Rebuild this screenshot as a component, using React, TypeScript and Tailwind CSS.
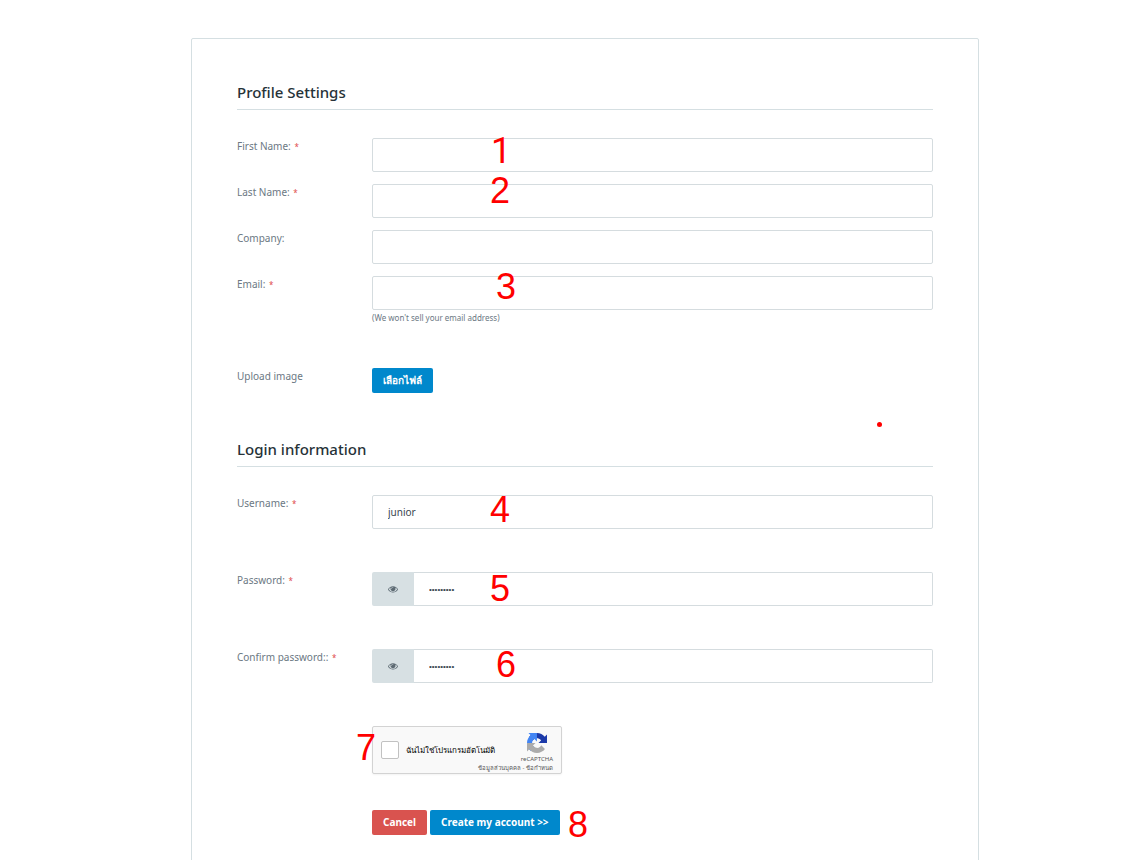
import { useState } from "react";
import type { ReactNode } from "react";

const inputClass =
  "block h-[34px] w-full rounded-xs border border-[#d5dcdf] bg-white px-[15px] text-[10px] text-[#3a4750] focus:outline-none focus:border-[#0088cc]";

const buttonClass =
  "h-[25px] rounded-xs px-[11px] text-[10px] leading-[25px] font-bold text-white";

function Heading({ children }: { children: ReactNode }) {
  return (
    <h2 className="mb-7 border-b border-[#d5dfe2] pb-[7px] text-[15px] leading-5 font-medium text-[#263238]">
      {children}
    </h2>
  );
}

function Row({
  label,
  htmlFor,
  required,
  children,
}: {
  label?: string;
  htmlFor?: string;
  required?: boolean;
  children: ReactNode;
}) {
  return (
    <div className="grid grid-cols-[135px_1fr] items-start">
      {label ? (
        <label htmlFor={htmlFor} className="text-[10px] leading-4 text-[#6b7883]">
          {label} {required && <span className="ml-px text-[8px] text-[#e04b4d]">*</span>}
        </label>
      ) : (
        <span />
      )}
      <div className="relative">{children}</div>
    </div>
  );
}

// Step number drawn on top of the form
function Step({ n, className }: { n: number; className: string }) {
  return (
    <span
      className={`pointer-events-none absolute text-[36px] leading-9 text-[#ff0000] ${className} ${
        n === 1 ? "font-['Roboto',sans-serif]" : "font-['Liberation_Sans',sans-serif]"
      }`}
    >
      {n}
    </span>
  );
}

function PasswordField({ id }: { id: string }) {
  const [visible, setVisible] = useState(false);
  const [value, setValue] = useState("junior123");

  return (
    <div className="flex h-[34px]">
      <button
        type="button"
        aria-label="Show password"
        onClick={() => setVisible(!visible)}
        className="flex w-[42px] shrink-0 items-center justify-center rounded-l-xs bg-[#d7e0e3] text-[#5d6a73]"
      >
        <EyeIcon />
      </button>
      <input
        id={id}
        type={visible ? "text" : "password"}
        value={value}
        onChange={(e) => setValue(e.target.value)}
        className="h-full min-w-0 flex-1 rounded-r-xs border border-l-0 border-[#d5dcdf] px-[15px] font-['Liberation_Sans',sans-serif] text-[8px] text-[#3a4750] focus:outline-none"
      />
    </div>
  );
}

function EyeIcon() {
  return (
    <svg width="10" height="10" viewBox="0 0 1792 1792" fill="currentColor">
      <path d="M1664 960q-152-236-381-353 61 104 61 225 0 185-131.5 316.5t-316.5 131.5-316.5-131.5-131.5-316.5q0-121 61-225-229 117-381 353 133 205 333.5 326.5t434.5 121.5 434.5-121.5 333.5-326.5zm-720-384q0-20-14-34t-34-14q-125 0-214.5 89.5t-89.5 214.5q0 20 14 34t34 14 34-14 14-34q0-86 61-147t147-61q20 0 34-14t14-34zm848 384q0 34-20 69-140 230-376.5 368.5t-499.5 138.5-499.5-139-376.5-368q-20-35-20-69t20-69q140-229 376.5-368t499.5-139 499.5 139 376.5 368q20 35 20 69z" />
    </svg>
  );
}

function RecaptchaLogo() {
  return (
    <svg width="20" height="20" viewBox="0 0 64 64">
      <path fill="#1c3aa9" d="M64 31.955l-.033-1.37V4.687l-7.16 7.16C50.948 4.674 42.033.093 32.05.093c-10.4 0-19.622 4.96-25.458 12.64l11.736 11.86a15.55 15.55 0 0 1 4.754-5.334c2.05-1.6 4.952-2.906 8.968-2.906.485 0 .86.057 1.135.163 4.976.393 9.288 3.14 11.828 7.124l-8.307 8.307L64 31.953" />
      <path fill="#4285f4" d="M31.862.094l-1.37.033H4.594l7.16 7.16C4.58 13.147 0 22.06 0 32.046c0 10.4 4.96 19.622 12.64 25.458L24.5 45.768a15.55 15.55 0 0 1-5.334-4.754c-1.6-2.05-2.906-4.952-2.906-8.968 0-.485.057-.86.163-1.135.393-4.976 3.14-9.288 7.124-11.828l8.307 8.307L31.86.095" />
      <path fill="#ababab" d="M.001 32.045l.033 1.37v25.898l7.16-7.16c5.86 7.173 14.774 11.754 24.76 11.754 10.4 0 19.622-4.96 25.458-12.64l-11.736-11.86a15.55 15.55 0 0 1-4.754 5.334c-2.05 1.6-4.952 2.906-8.968 2.906-.485 0-.86-.057-1.135-.163-4.976-.393-9.288-3.14-11.828-7.124l8.307-8.307c-10.522.04-22.4.066-27.295-.005" />
    </svg>
  );
}

function Recaptcha() {
  return (
    <div className="flex h-12 w-[190px] items-center rounded-xs border border-[#d3d3d3] bg-[#f9f9f9] px-2 shadow-xs">
      <input
        id="robot"
        type="checkbox"
        className="h-[18px] w-[18px] shrink-0 appearance-none rounded-xs border border-[#c1c1c1] bg-white checked:bg-[#4285f4]"
      />
      <label htmlFor="robot" className="ml-[7px] text-[8px] whitespace-nowrap text-black">
        ฉันไม่ใช่โปรแกรมอัตโนมัติ
      </label>
      <div className="ml-auto flex w-9 flex-col items-end self-end text-[6px] leading-[9px] text-[#555]">
        <div className="flex flex-col items-center">
          <RecaptchaLogo />
          <span className="mt-[2px]">reCAPTCHA</span>
        </div>
        <p className="whitespace-nowrap">
          <a href="#privacy">ข้อมูลส่วนบุคคล</a> - <a href="#terms">ข้อกำหนด</a>
        </p>
      </div>
    </div>
  );
}

export default function App() {
  const [username, setUsername] = useState("junior");

  return (
    <div className="min-h-screen bg-white pt-[38px] pl-[27px] font-['Noto_Sans',sans-serif]">
      <form
        onSubmit={(e) => e.preventDefault()}
        className="mx-auto max-w-[788px] rounded-xs border border-[#d5dfe2] px-[45px] pt-[43px] pb-12"
      >
        <section>
          <Heading>Profile Settings</Heading>
          <div className="flex flex-col gap-3">
            <Row label="First Name:" htmlFor="first" required>
              <input id="first" type="text" className={inputClass} />
              <Step n={1} className="-top-[5px] left-[119px]" />
            </Row>
            <Row label="Last Name:" htmlFor="last" required>
              <input id="last" type="text" className={inputClass} />
              <Step n={2} className="-top-[11px] left-[118px]" />
            </Row>
            <Row label="Company:" htmlFor="company">
              <input id="company" type="text" className={inputClass} />
            </Row>
            <Row label="Email:" htmlFor="email" required>
              <input id="email" type="email" className={inputClass} />
              <p className="mt-[2px] text-[8px] leading-3 text-[#6b7883]">
                (We won't sell your email address)
              </p>
              <Step n={3} className="-top-[7px] left-[124px]" />
            </Row>
          </div>
          <div className="mt-11">
            <Row label="Upload image" htmlFor="upload">
              <button id="upload" type="button" className={`${buttonClass} block bg-[#0088cc]`}>
                เลือกไฟล์
              </button>
              <span className="pointer-events-none absolute top-[54px] right-[51px] h-[5px] w-[5px] rounded-full bg-[#ff0000]" />
            </Row>
          </div>
        </section>

        <section className="mt-[46px]">
          <Heading>Login information</Heading>
          <div className="flex flex-col gap-[43px]">
            <Row label="Username:" htmlFor="username" required>
              <input
                id="username"
                type="text"
                value={username}
                onChange={(e) => setUsername(e.target.value)}
                className={inputClass}
              />
              <Step n={4} className="-top-[3px] left-[118px]" />
            </Row>
            <Row label="Password:" htmlFor="password" required>
              <PasswordField id="password" />
              <Step n={5} className="-top-px left-[118px]" />
            </Row>
            <Row label="Confirm password::" htmlFor="confirm" required>
              <PasswordField id="confirm" />
              <Step n={6} className="-top-[2px] left-[124px]" />
            </Row>
            <Row>
              <Recaptcha />
              <Step n={7} className="top-1 -left-4" />
            </Row>
          </div>
          <div className="mt-9">
            <Row>
              <div className="flex gap-[3px]">
                <button type="button" className={`${buttonClass} bg-[#d9534f]`}>
                  Cancel
                </button>
                <button type="submit" className={`${buttonClass} bg-[#0088cc]`}>
                  Create my account &gt;&gt;
                </button>
              </div>
              <Step n={8} className="-top-[3px] left-[196px]" />
            </Row>
          </div>
        </section>
      </form>
    </div>
  );
}
